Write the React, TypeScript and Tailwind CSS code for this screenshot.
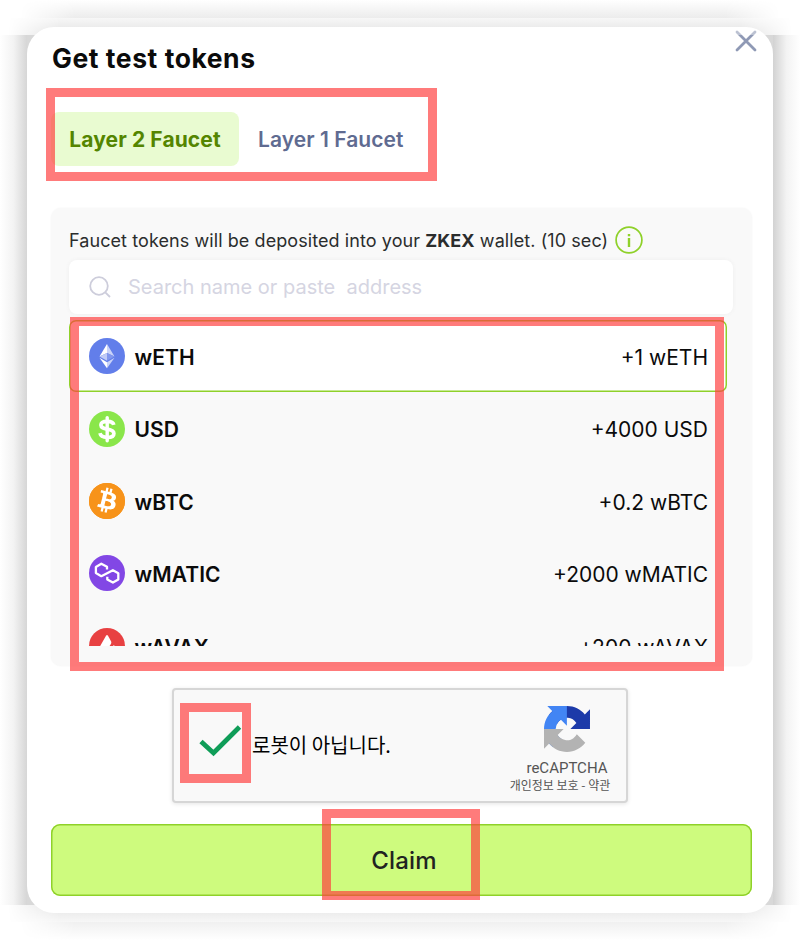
import type { ReactNode } from "react";
import { FaBitcoin } from "react-icons/fa6";

function Frame({ className }: { className: string }) {
  return <div className={`pointer-events-none absolute z-10 border-9 border-[#ff3d3d]/68 ${className}`} />;
}

function EthIcon() {
  return (
    <svg viewBox="0 0 36 36" className="size-9">
      <circle cx="18" cy="18" r="18" fill="#627eea" />
      <path d="M18 6v9l7.5 3.4z" fill="#c9d3f8" />
      <path d="M18 6l-7.5 12.4L18 15z" fill="#fff" />
      <path d="M18 15v7.8l7.5-4.4z" fill="#8197ee" />
      <path d="M10.5 18.4l7.5 4.4V15z" fill="#c0cbf7" />
      <path d="M18 24.2V30.2l7.5-10.4z" fill="#c9d3f8" />
      <path d="M18 30.2v-6l-7.5-4.4z" fill="#fff" />
    </svg>
  );
}

function UsdIcon() {
  return (
    <svg viewBox="0 0 36 36" className="size-9" fill="none" stroke="#fff">
      <circle cx="18" cy="18" r="18" fill="#8ae64a" stroke="none" />
      <path d="M24.800 13.800C24.300 11.400 21.800 10.300 18.300 10.300C14.600 10.300 11.900 11.500 11.900 14.100C11.900 16.800 14.700 17.400 18.200 18.100C21.900 18.800 24.900 19.700 24.900 22.400C24.900 25 22.100 26.400 18.300 26.400C14.300 26.400 11.500 25 11 22.200" strokeWidth="3.700" />
      <path d="M18.200 6.800V29.800" strokeWidth="3.400" strokeLinecap="round" />
    </svg>
  );
}

function BtcIcon() {
  return (
    <div className="flex size-9 items-center justify-center overflow-hidden rounded-full bg-[radial-gradient(#fff_60%,#f7931a_61%)] text-[#f7931a]">
      <FaBitcoin className="size-[41px] shrink-0" />
    </div>
  );
}

function MaticIcon() {
  return (
    <svg viewBox="0 0 36 36" className="size-9">
      <circle cx="18" cy="18" r="18" fill="#8247e5" />
      <path
        d="M18 14.600V11.800L12.300 8.700L6.900 11.900V18.100L12.300 21.200L23.900 15.200L29.300 18.300V24.400L23.900 27.600L18.300 24.400V21.800"
        fill="none"
        stroke="#fff"
        strokeWidth="2.3"
        strokeLinejoin="round"
      />
    </svg>
  );
}

function AvaxIcon() {
  return (
    <svg viewBox="0 0 36 36" className="size-9">
      <circle cx="18" cy="18" r="18" fill="#e84142" />
      <path d="M17 7.8q1-1.7 2 0l2.9 5.200q.8 1.5 0 3L14.500 27H8q-1.800 0-1-1.600z" fill="#fff" />
      <path d="M23.800 18.200q1-1.700 2 0l4 7q1 1.800-1 1.800h-8q-2 0-1-1.800z" fill="#fff" />
    </svg>
  );
}

function RecaptchaLogo() {
  return (
    <svg viewBox="0 0 64 64" className="size-[46px]">
      <path
        d="M64 31.955l-.033-1.37V4.687l-7.16 7.16C50.948 4.674 42.033.093 32.05.093c-10.4 0-19.622 4.96-25.458 12.64l11.736 11.86a15.55 15.55 0 0 1 4.754-5.334c2.05-1.6 4.952-2.906 8.968-2.906.485 0 .86.057 1.135.163 4.976.393 9.288 3.14 11.828 7.124l-8.307 8.307L64 31.953"
        fill="#1c3aa9"
      />
      <path
        d="M31.862.094l-1.37.033H4.594l7.16 7.16C4.58 13.147 0 22.06 0 32.046c0 10.4 4.96 19.622 12.64 25.458L24.5 45.768a15.55 15.55 0 0 1-5.334-4.754c-1.6-2.05-2.906-4.952-2.906-8.968 0-.485.057-.86.163-1.135.393-4.976 3.14-9.288 7.124-11.828l8.307 8.307L31.86.095"
        fill="#4285f4"
      />
      <path
        d="M.001 32.045l.033 1.37v25.898l7.16-7.16c5.86 7.173 14.774 11.754 24.76 11.754 10.4 0 19.622-4.96 25.458-12.64l-11.736-11.86a15.55 15.55 0 0 1-4.754 5.334c-2.05 1.6-4.952 2.906-8.968 2.906-.485 0-.86-.057-1.135-.163-4.976-.393-9.288-3.14-11.828-7.124l8.307-8.307c-10.522.04-22.4.066-27.295-.005"
        fill="#b3b3b3"
      />
    </svg>
  );
}

const tokens: { name: string; amount: string; icon: ReactNode; selected?: boolean }[] = [
  { name: "wETH", amount: "+1 wETH", icon: <EthIcon />, selected: true },
  { name: "USD", amount: "+4000 USD", icon: <UsdIcon /> },
  { name: "wBTC", amount: "+0.2 wBTC", icon: <BtcIcon /> },
  { name: "wMATIC", amount: "+2000 wMATIC", icon: <MaticIcon /> },
  { name: "wAVAX", amount: "+200 wAVAX", icon: <AvaxIcon /> },
];

export default function App() {
  return (
    <div className="relative h-[940px] w-[800px] overflow-hidden bg-white p-[27px] font-['Inter','Noto_Sans_CJK_KR',sans-serif]">
      {/* modal shadow bands */}
      <div className="absolute inset-x-0 top-0 h-[18px] bg-linear-to-b from-white to-[#ececec] mask-[linear-gradient(to_right,transparent_20px,black_75px,black_725px,transparent_780px)]" />
      <div className="absolute inset-x-0 top-[18px] h-[17px] bg-linear-to-b from-[#f7f7f7] to-[#e2e2e2] mask-[linear-gradient(to_right,transparent_8px,black_60px,black_740px,transparent_792px)]" />
      <div className="absolute top-[35px] left-0 h-[870px] w-[27px] bg-linear-to-r from-white via-[#f3f3f3] to-[#d6d6d6]" />
      <div className="absolute top-[35px] right-0 h-[870px] w-[27px] bg-linear-to-l from-white via-[#f3f3f3] to-[#d2d2d2]" />
      <div className="absolute top-[35px] left-[27px] h-[870px] w-[746px] bg-[#d8d8d8]" />
      <div className="absolute inset-x-0 top-[905px] h-[17px] bg-linear-to-t from-[#f7f7f7] to-[#e4e4e4] mask-[linear-gradient(to_right,transparent_8px,black_60px,black_740px,transparent_792px)]" />
      <div className="absolute inset-x-0 top-[922px] h-[18px] bg-linear-to-t from-white to-[#f0f0f0] mask-[linear-gradient(to_right,transparent_20px,black_75px,black_725px,transparent_780px)]" />

      <main className="relative flex h-[886px] flex-col rounded-[27px] bg-white px-6 pt-[15px]">
        <header className="flex h-8 items-center justify-between">
          <h1 className="pt-0.5 pl-px text-[26.5px] font-bold tracking-[0.550px] whitespace-nowrap text-[#0b0b0b]">Get test tokens</h1>
          <svg viewBox="0 0 22 22" className="relative -top-[17px] -right-[8px] size-[22px]">
            <path d="M2 2l18 18M20 2L2 20" stroke="#8f99b5" strokeWidth="2.8" strokeLinecap="round" />
            <path d="M0 0h22v5H0z" fill="#fff" fillOpacity=".4" />
          </svg>
        </header>

        <nav className="mt-[38px] flex h-[54px] shrink-0 text-[21px]">
          <button className="h-full w-[188px] rounded-lg bg-[#e9fbd1] pt-0.5 font-bold tracking-[0.100px] whitespace-nowrap text-[#548500]">Layer 2 Faucet</button>
          <button className="ml-[19px] pt-0.5 font-semibold tracking-[0.05px] whitespace-nowrap text-[#5f6b91]">Layer 1 Faucet</button>
        </nav>
        <Frame className="top-[61px] left-[19px] h-[93px] w-[391px]" />

        <section className="mt-[42px] h-[458px] w-[701px] shrink-0 rounded-[10px] bg-[#f9f9f9] pt-[18px] pr-[19px] pl-[18px] shadow-[0_0_2px_#f3f3f3]">
          <div className="flex h-7 items-center gap-[7px]">
            <p className="text-[18px] tracking-[0.08px] whitespace-nowrap text-[#2b2d2d]">
              Faucet tokens will be deposited into your <b>ZKEX</b> wallet. (10 sec)
            </p>
            <svg viewBox="0 0 28 28" className="size-7" fill="none" stroke="#8fd12a">
              <circle cx="14" cy="14" r="12.900" strokeWidth="1.7" />
              <path d="M14 12v9M14 8v2.300" strokeWidth="2.400" />
            </svg>
          </div>
          <div className="mt-1.5 flex h-[54px] items-center rounded-lg bg-white pl-5 shadow-[0_0_4px_#efefef]">
            <svg viewBox="0 0 22 22" className="size-[22px]" fill="none" stroke="#cdcddb" strokeWidth="1.8">
              <circle cx="10" cy="10" r="8.800" />
              <path d="M16.300 16.300l4.700 4.700" />
            </svg>
            <span className="ml-[17px] text-[20px] whitespace-pre text-[#d5d5e2]">Search name or paste  address</span>
          </div>
          <ul className="mt-1.5 h-[326px] w-[658px] overflow-hidden">
            {tokens.map((t) => (
              <li
                key={t.name}
                className={`flex h-[72.400px] items-center rounded-[7px] pr-[19px] pl-5 text-[21px] text-[#0b0b0b] ${
                  t.selected ? "bg-white shadow-[inset_0_0_0_1.500px_#8fd12a]" : ""
                }`}
              >
                {t.icon}
                <span className="ml-[9.500px] flex-1 pt-[3px] font-semibold tracking-[0.100px]">{t.name}</span>
                <span className="pt-[3px]">{t.amount}</span>
              </li>
            ))}
          </ul>
        </section>
        <Frame className="top-[290px] left-[43px] h-[354px] w-[654px]" />

        <section className="mt-[22px] ml-[121px] flex h-[115px] w-[456px] shrink-0 items-center rounded-[4px] border-2 border-[#d6d6d6] bg-[#f9f9f9] shadow-[0_1px_4px_#e5e5e5]">
          <svg viewBox="0 0 44 34" className="ml-[25px] h-[34px] w-11 -translate-y-[5px]">
            <path d="M2 17.500L14.500 29L40.500 3" fill="none" stroke="#0f9d58" strokeWidth="4.800" />
          </svg>
          <p className="ml-[9px] flex-1 pb-0.5 font-['Noto_Sans_CJK_KR',sans-serif] text-[20px] whitespace-nowrap text-black">로봇이 아닙니다.</p>
          <div className="mr-[15px] flex w-[102px] flex-col items-center pt-[7px]">
            <span className="ml-3.5"><RecaptchaLogo /></span>
            <span className="mt-[7px] ml-3.5 font-['Roboto',sans-serif] text-[15px] leading-[18px] text-[#555]">reCAPTCHA</span>
            <span className="font-['Noto_Sans_CJK_KR',sans-serif] text-[12px] leading-4 whitespace-nowrap text-[#555]">개인정보 보호 - 약관</span>
          </div>
        </section>
        <Frame className="top-[676px] left-[153px] h-[80px] w-[71px]" />

        <button className="mt-[21px] h-[72px] w-[701px] shrink-0 rounded-[9px] bg-[#cefb7e] pt-0.5 pl-[5px] text-[24px] font-medium tracking-[0.200px] text-[#212321] shadow-[inset_0_0_0_1.500px_#8fd12a]">
          Claim
        </button>
        <Frame className="top-[782px] left-[295px] h-[91px] w-[158px]" />
      </main>
    </div>
  );
}
